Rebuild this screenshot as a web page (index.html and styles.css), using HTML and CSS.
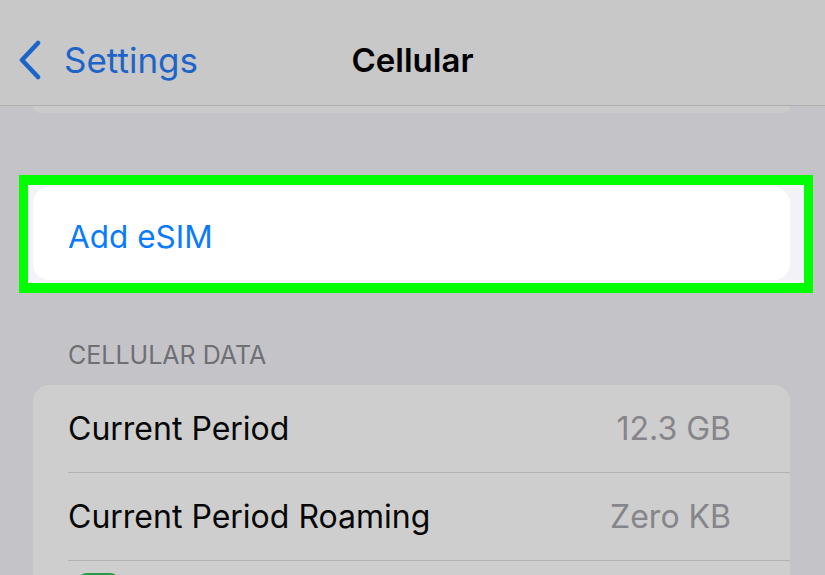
FILE: index.html
```html
<!DOCTYPE html>
<html>
<head>
<meta charset="utf-8">
<link rel="stylesheet" href="styles.css">
</head>
<body>
<div class="screen">
  <header class="nav">
    <div class="back">
      <svg class="chev" width="24" height="40" viewBox="0 0 24 40"><path d="M20 3 L4 20 L20 37" fill="none" stroke="#1d64c9" stroke-width="4.6" stroke-linecap="round" stroke-linejoin="round"/></svg>
      <span class="back-label">Settings</span>
    </div>
    <div class="title">Cellular</div>
    <div></div>
  </header>
  <div class="prev-card"></div>

  <div class="highlight">
    <div class="card white">
      <div class="row"><span class="link">Add eSIM</span></div>
    </div>
  </div>

  <div class="section-header">CELLULAR DATA</div>
  <div class="card grey">
    <div class="row"><span class="label">Current Period</span><span class="value">12.3 GB</span></div>
    <div class="sep"></div>
    <div class="row"><span class="label">Current Period Roaming</span><span class="value">Zero KB</span></div>
    <div class="sep"></div>
    <div class="row icon-row"><span class="app-icon"></span></div>
  </div>
</div>
</body>
</html>
```

FILE: styles.css
```css
html, body {
  margin: 0;
  padding: 0;
}
* {
  box-sizing: border-box;
}
body {
  width: 825px;
  height: 575px;
  overflow: hidden;
  background: #c4c4c8;
  font-family: Inter, "Noto Sans", "Liberation Sans", sans-serif;
}
.screen {
  display: flex;
  flex-direction: column;
}
.nav {
  height: 106px;
  padding-top: 15px;
  background: #c8c8c8;
  border-bottom: 1px solid #aeaeae;
  display: grid;
  grid-template-columns: 1fr auto 1fr;
  align-items: center;
}
.back {
  display: flex;
  align-items: center;
  padding-left: 18px;
  gap: 22px;
}
.chev {
  display: block;
}
.back-label {
  color: #1d64c9;
  font-size: 35px;
  line-height: 40px;
}
.title {
  font-size: 33px;
  line-height: 40px;
  font-weight: 600;
  color: #000;
}
.prev-card {
  height: 7px;
  margin: 0 35px 0 33px;
  background: #cbcbcb;
  border-radius: 0 0 16px 16px;
}
.highlight {
  margin: 62px 0 0 19px;
  width: 794px;
  border: solid #00ff00;
  border-width: 10px 9px;
  background: #f2f2f7;
  padding: 2px 14px 3px 5px;
}
.card {
  border-radius: 16px;
  overflow: hidden;
}
.white {
  background: #ffffff;
}
.white .row {
  height: 93px;
  padding-top: 5px;
}
.row {
  display: flex;
  align-items: center;
  justify-content: space-between;
  height: 87px;
  padding: 0 59px 0 35px;
  font-size: 32px;
}
.link {
  color: #0a7aff;
  font-size: 31.5px;
}
.section-header {
  margin: 48px 0 16px 68px;
  font-size: 25px;
  line-height: 28px;
  color: #6f6f74;
}
.grey {
  margin-left: 33px;
  width: 757px;
  background: #cecece;
  border-radius: 16px 16px 0 0;
  height: 200px;
}
.label {
  color: #060606;
}
.value {
  color: #85858a;
}
.sep {
  height: 1px;
  margin-left: 35px;
  background: #b3b3b3;
}
.icon-row {
  align-items: flex-start;
  padding-top: 12px;
  padding-left: 44px;
}
.app-icon {
  width: 43px;
  height: 43px;
  border-radius: 10px;
  background: #2a9a45;
}
```
